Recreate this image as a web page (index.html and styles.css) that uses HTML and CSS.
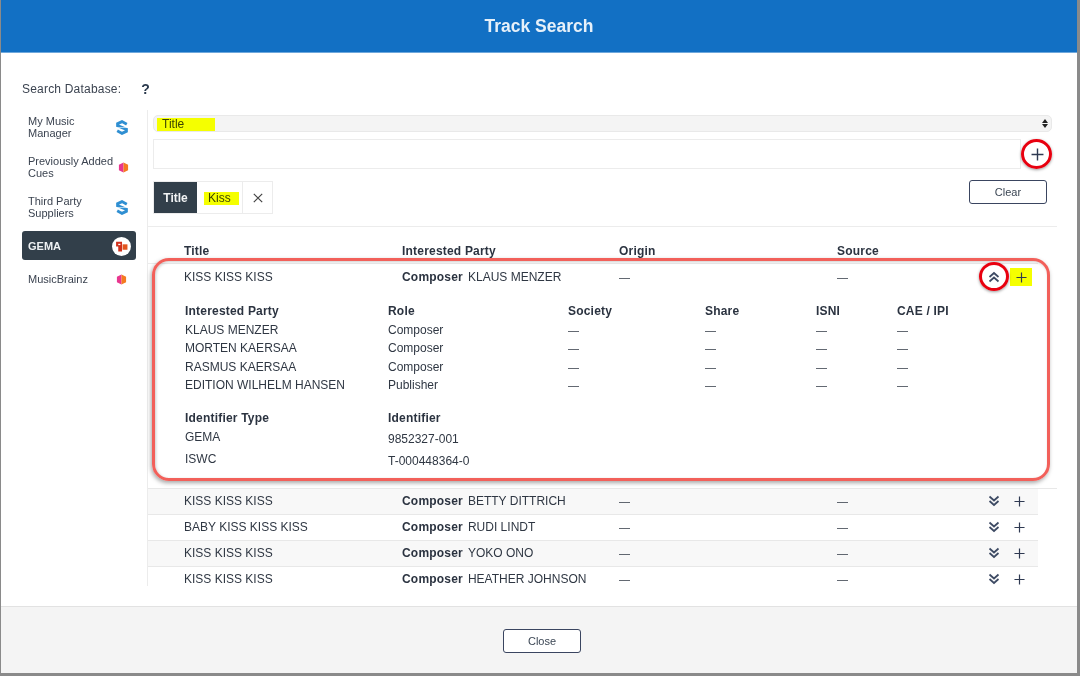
FILE: index.html
```html
<!DOCTYPE html>
<html lang="en">
<head>
<meta charset="utf-8">
<title>Track Search</title>
<link rel="stylesheet" href="styles.css">
</head>
<body>
<svg class="defs" width="0" height="0" aria-hidden="true">
  <defs>
    <symbol id="i-s" viewBox="0 0 12 15">
      <path d="M10.800 4.200 6 1.600 1.600 3.700V5.700L10.400 9.300V11.300L6 13.400 1.200 10.800" fill="none" stroke="#2f8fd2" stroke-width="2.900"/>
      <path d="M0 7.500H12" stroke="#fff" stroke-width=".6" fill="none"/>
    </symbol>
    <symbol id="i-hex" viewBox="0 0 12 12">
      <path d="M6 .5 1 3v6l5 2.500Z" fill="#e8368f"/>
      <path d="M6 .5 11 3v6l-5 2.500Z" fill="#f47a20"/>
    </symbol>
    <symbol id="i-up" viewBox="0 0 12 12">
      <path d="M1.500 6 6 2l4.500 4M1.500 10.500 6 6.500l4.500 4" fill="none" stroke="#3d4a63" stroke-width="1.700"/>
    </symbol>
    <symbol id="i-down" viewBox="0 0 12 12">
      <path d="M1.500 1.500 6 5.500l4.500-4M1.500 6 6 10l4.500-4" fill="none" stroke="#3d4a63" stroke-width="1.700"/>
    </symbol>
    <symbol id="i-plus" viewBox="0 0 12 12">
      <path d="M6 .5v11M.5 6h11" fill="none" stroke="#2f3a52" stroke-width="1.300"/>
    </symbol>
  </defs>
</svg>

<div class="modal">
  <header class="modal-head"><h1>Track Search</h1></header>

  <div class="modal-body">
    <div class="db-label"><span>Search Database:</span><b class="help">?</b></div>
    <div class="columns">
      <nav class="side">
        <a class="side-item"><span>My Music Manager</span><svg class="ic-s"><use href="#i-s"/></svg></a>
        <a class="side-item"><span>Previously Added Cues</span><svg class="ic-h"><use href="#i-hex"/></svg></a>
        <a class="side-item"><span>Third Party Suppliers</span><svg class="ic-s"><use href="#i-s"/></svg></a>
        <a class="side-item active"><span>GEMA</span>
          <i class="gema-badge"><svg viewBox="0 0 12 12" width="13" height="13"><path d="M1 1.500h5.500v9H3V6H1Z" fill="#d0301c"/><path d="M7 4h4.500v5H7Z" fill="#e2551e"/><path d="M3 3.500h2v1.200H3Z" fill="#fff"/></svg></i>
        </a>
        <a class="side-item single"><span>MusicBrainz</span><svg class="ic-h"><use href="#i-hex"/></svg></a>
      </nav>

      <main class="main">
        <div class="select"><span class="hl hl-title">Title</span><span class="arrows"><i class="a-up"></i><i class="a-down"></i></span></div>
        <div class="input-row">
          <div class="input"></div>
          <button class="add-btn" aria-label="Add"><svg width="13" height="13"><use href="#i-plus"/></svg></button>
        </div>
        <div class="chip-row">
          <div class="chip"><span class="chip-key">Title</span><span class="chip-val"><span class="hl">Kiss</span></span><span class="chip-x"><svg width="10" height="10" viewBox="0 0 10 10"><path d="M.8.8l8.400 8.400M9.200.8.800 9.200" fill="none" stroke="#444" stroke-width="1.200"/></svg></span></div>
          <button class="btn clear">Clear</button>
        </div>

        <div class="table">
          <div class="row head"><span>Title</span><span>Interested Party</span><span>Origin</span><span>Source</span><span></span></div>
          <div class="scroll">
            <section class="expanded">
              <div class="row first">
                <span>KISS KISS KISS</span>
                <span class="party"><b>Composer</b>KLAUS MENZER</span>
                <span class="d">—</span><span class="d">—</span>
                <span class="acts"><svg class="chev"><use href="#i-up"/></svg><i class="plus-hl"><svg width="11" height="11"><use href="#i-plus"/></svg></i></span>
              </div>
              <div class="detail">
                <b>Interested Party</b><b>Role</b><b>Society</b><b>Share</b><b>ISNI</b><b>CAE / IPI</b>
                <span>KLAUS MENZER</span><span>Composer</span><span class="d">—</span><span class="d">—</span><span class="d">—</span><span class="d">—</span>
                <span>MORTEN KAERSAA</span><span>Composer</span><span class="d">—</span><span class="d">—</span><span class="d">—</span><span class="d">—</span>
                <span>RASMUS KAERSAA</span><span>Composer</span><span class="d">—</span><span class="d">—</span><span class="d">—</span><span class="d">—</span>
                <span>EDITION WILHELM HANSEN</span><span>Publisher</span><span class="d">—</span><span class="d">—</span><span class="d">—</span><span class="d">—</span>
              </div>
              <div class="ids">
                <b>Identifier Type</b><b>Identifier</b>
                <span>GEMA</span><span class="id-val">9852327-001</span>
                <span>ISWC</span><span class="id-val">T-000448364-0</span>
              </div>
            </section>
            <div class="row item alt"><span>KISS KISS KISS</span><span class="party"><b>Composer</b>BETTY DITTRICH</span><span class="d">—</span><span class="d">—</span><span class="acts"><svg class="chev"><use href="#i-down"/></svg><svg class="plus"><use href="#i-plus"/></svg></span></div>
            <div class="row item"><span>BABY KISS KISS KISS</span><span class="party"><b>Composer</b>RUDI LINDT</span><span class="d">—</span><span class="d">—</span><span class="acts"><svg class="chev"><use href="#i-down"/></svg><svg class="plus"><use href="#i-plus"/></svg></span></div>
            <div class="row item alt"><span>KISS KISS KISS</span><span class="party"><b>Composer</b>YOKO ONO</span><span class="d">—</span><span class="d">—</span><span class="acts"><svg class="chev"><use href="#i-down"/></svg><svg class="plus"><use href="#i-plus"/></svg></span></div>
            <div class="row item"><span>KISS KISS KISS</span><span class="party"><b>Composer</b>HEATHER JOHNSON</span><span class="d">—</span><span class="d">—</span><span class="acts"><svg class="chev"><use href="#i-down"/></svg><svg class="plus"><use href="#i-plus"/></svg></span></div>
          </div>
        </div>
      </main>
    </div>
  </div>

  <footer class="modal-foot"><button class="btn close">Close</button></footer>

  <div class="mark-box"></div>
  <div class="mark-circle c-add"></div>
  <div class="mark-circle c-chev"></div>
</div>
</body>
</html>
```
FILE: styles.css
```css
* { box-sizing: border-box; }
html, body { margin: 0; height: 100%; }
body {
  width: 1080px; height: 676px; overflow: hidden;
  background: #8a8a8a;
  font-family: "Liberation Sans", Arial, sans-serif;
  font-size: 12px; color: #2f3743;
}
.defs { position: absolute; }
b { font-weight: 700; color: #2b3340; letter-spacing: .2px; }

.modal {
  position: relative;
  width: 1076px; height: 673px; margin-left: 1px;
  background: #fff;
  display: flex; flex-direction: column;
  filter: blur(.3px);
}
.modal-head {
  height: 53px; flex: none;
  background: #1270c4;
  border-bottom: 1px solid #6fa8dc;
  display: flex; align-items: center; justify-content: center;
}
.modal-head h1 { margin: 1px 0 0; font-size: 17.500px; font-weight: 700; color: #e6f0f9; }

.modal-body { flex: 1; min-height: 0; padding: 0 20px 20px 21px; display: flex; flex-direction: column; }
.db-label { height: 57px; flex: none; display: flex; align-items: center; padding-top: 15px; color: #3b4350; letter-spacing: .2px; }
.help { margin-left: 20px; font-size: 14px; color: #2b3a4d; }

.columns { flex: 1; min-height: 0; display: flex; }
.side { width: 114px; flex: none; margin: -4px 11px 0 0; }
.side-item {
  height: 40px; display: flex; align-items: center; justify-content: space-between;
  padding: 2px 7px 0 6px;
  font-size: 11px; line-height: 12.500px; color: #3b4350;
}
.side-item span { max-width: 88px; }
.side-item.active {
  height: 29px; margin: 5px 0 3px; padding: 1px 5px 0 6px;
  background: #323f4a; border-radius: 3px;
  color: #eef1f3; font-weight: 700;
}
.side-item.single { height: 31px; padding-right: 9px; }
.ic-s { width: 12px; height: 15px; margin-right: 1px; }
.ic-h { width: 11px; height: 11px; }
.gema-badge {
  width: 19px; height: 19px; border-radius: 50%; background: #fff;
  display: flex; align-items: center; justify-content: center;
}

.main { flex: 1; min-width: 0; border-left: 1px solid #ececec; padding-top: 5px; display: flex; flex-direction: column; }
.select {
  height: 17px; margin: 0 5px;
  background: #f4f4f4; border: 1px solid #e9e9e9; border-radius: 5px;
  display: flex; align-items: center; justify-content: space-between;
  padding: 0 3px 0 3px;
}
.hl { background: #f5ff00; color: #3a4200; padding: 0 5px; line-height: 13px; display: inline-block; }
.hl-title { width: 58px; margin-top: 2px; }
.arrows { display: flex; flex-direction: column; gap: 1px; }
.a-up, .a-down { display: block; width: 0; height: 0; border-left: 3.500px solid transparent; border-right: 3.500px solid transparent; }
.a-up { border-bottom: 4.500px solid #222; }
.a-down { border-top: 4.500px solid #222; }

.input-row { margin: 7px 0 0 5px; display: flex; align-items: center; }
.input { width: 868px; height: 30px; border: 1px solid #ececec; background: #fff; }
.add-btn { width: 26px; height: 26px; margin: 0 0 0 3px; padding: 0; border: 0; background: none; display: flex; align-items: center; justify-content: center; }

.chip-row {
  margin: 12px 0 0; padding: 0 10px 12px 5px;
  border-bottom: 1px solid #ececec;
  display: flex; justify-content: space-between; align-items: flex-start;
  height: 46px;
}
.chip { height: 33px; display: flex; border: 1px solid #ececec; }
.chip-key { width: 43px; background: #323f4a; color: #f1f3f4; font-weight: 700; display: flex; align-items: center; justify-content: center; }
.chip-val { width: 46px; display: flex; align-items: center; padding-left: 7px; border-right: 1px solid #ececec; }
.chip-val .hl { padding: 0 4px; width: 35px; margin-top: 2px; }
.chip-x { width: 29px; display: flex; align-items: center; justify-content: center; }
.btn {
  width: 78px; height: 24px; padding: 0;
  border: 1px solid #3a4560; border-radius: 3px; background: #fff;
  font: 11px "Liberation Sans", Arial, sans-serif; color: #3b4654;
}
.clear { margin-top: -1px; }
.close { margin-left: 6px; }

.table { flex: 1; min-height: 0; display: flex; flex-direction: column; }
.row {
  width: 890px; display: grid;
  grid-template-columns: 218px 217px 218px 148px 53px;
  padding-left: 36px; align-items: center;
}
.head { height: 37px; padding-top: 12px; font-weight: 700; color: #2b3340; letter-spacing: .2px; border-bottom: 1px solid #ececec; }
.scroll { flex: 1; min-height: 0; overflow: hidden; }
.expanded { height: 225px; border-bottom: 1px solid #e8e8e8; }
.first { height: 26px; }
.party { padding-bottom: 1px; }
.party b { margin-right: 5px; }
.item { height: 26px; padding-bottom: 1px; border-bottom: 1px solid #e8e8e8; }
.alt { background: #f8f8f8; }
.d { font-size: 11px; }
.acts { display: flex; align-items: center; padding-left: 3px; }
.chev { width: 12px; height: 12px; }
.plus { width: 11px; height: 11px; margin-left: 14px; }
.plus-hl {
  width: 22px; height: 18px; margin-left: 10px;
  background: #f5ff00; display: flex; align-items: center; justify-content: center;
}

.detail {
  margin: 12px 0 0; padding-left: 37px;
  display: grid; grid-template-columns: 203px 180px 137px 111px 81px 100px;
  grid-auto-rows: 18.500px; align-items: center;
}
.ids {
  margin: 15px 0 0; padding-left: 37px;
  display: grid; grid-template-columns: 203px 300px;
  grid-template-rows: 19px 22px 22px; align-items: start; line-height: 16px;
}
.id-val { padding-top: 2px; }

.modal-foot {
  height: 67px; flex: none;
  background: #f4f4f4; border-top: 1px solid #e2e2e2;
  display: flex; align-items: flex-start; justify-content: center; padding-top: 22px;
}

.mark-box {
  position: absolute; left: 151px; top: 258px; width: 898px; height: 223px;
  border: 3px solid #f2605a; border-radius: 17px;
  box-shadow: -1px 2px 4px rgba(0,0,0,.35), inset 1px 1px 3px rgba(0,0,0,.2);
  pointer-events: none;
}
.mark-circle {
  position: absolute; width: 31px; height: 30px;
  border: 3.500px solid #e8000f; border-radius: 50%;
  box-shadow: 0 1px 3px rgba(0,0,0,.4);
  pointer-events: none;
}
.c-add { left: 1020px; top: 139px; }
.c-chev { left: 978px; top: 262px; width: 30px; height: 29px; }
```
